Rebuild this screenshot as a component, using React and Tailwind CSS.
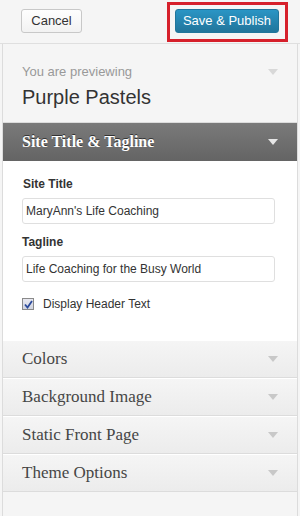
import React from "react";

function Arrow({ color = "border-t-[#c8c8c8]" }) {
  return (
    <span
      className={`block w-0 h-0 border-l-[5px] border-r-[5px] border-t-[6px] border-l-transparent border-r-transparent ${color}`}
    />
  );
}

function Section({ title }) {
  return (
    <div className="flex items-center justify-between h-[38px] pl-[19px] pr-[19px] border-t border-t-[#fff] border-b border-b-[#dcdcdc] bg-gradient-to-b from-[#f5f5f5] to-[#ececec]">
      <span className="text-[17px] text-[#464646]" style={{ fontFamily: '"Liberation Serif", "DejaVu Serif", serif' }}>
        {title}
      </span>
      <Arrow />
    </div>
  );
}

export default function App() {
  const sans = { fontFamily: '"Liberation Sans", Arial, sans-serif' };
  return (
    <div className="w-[300px] h-[516px] bg-[#f5f5f5] overflow-hidden" style={sans}>
      {/* top bar */}
      <div className="relative h-[44px] border-b border-[#dfdfdf] bg-[#f5f5f5] flex items-start justify-between pl-[21px] pr-[21px] pt-[9px]">
        <button className="h-[24px] w-[61px] rounded-[3px] border border-[#c8c8c8] bg-gradient-to-b from-[#fefefe] to-[#f2f2f2] text-[13px] text-[#333]">
          Cancel
        </button>
        <button className="h-[24px] w-[104px] rounded-[3px] border border-[#21759b] bg-gradient-to-b from-[#2a95c5] to-[#21759b] text-[13px] text-white">
          Save &amp; Publish
        </button>
        <div className="absolute left-[167px] top-[2px] w-[121px] h-[40px] border-[3px] border-[#d6202b] pointer-events-none" />
      </div>

      <div className="mx-[2px] w-[296px] border-l border-r border-[#dcdcdc] h-[472px] flex flex-col">
        {/* preview */}
        <div className="h-[79px] bg-[#f5f5f5] border-b border-[#dcdcdc] pl-[19px] pr-[19px] pt-[20px] flex justify-between">
          <div>
            <div className="text-[13px] text-[#999] leading-[16px]">You are previewing</div>
            <div className="text-[20px] text-[#333] leading-[24px] mt-[5px]">Purple Pastels</div>
          </div>
          <div className="pt-[5px]">
            <Arrow color="border-t-[#d8d8d8]" />
          </div>
        </div>

        {/* open section */}
        <div className="h-[38px] bg-gradient-to-b from-[#7a7a7a] to-[#646464] flex items-center justify-between pl-[19px] pr-[19px]">
          <span
            className="text-[16px] font-bold text-white"
            style={{ fontFamily: '"Liberation Serif", "DejaVu Serif", serif', textShadow: "0 -1px 0 #333" }}
          >
            Site Title &amp; Tagline
          </span>
          <Arrow color="border-t-[#e6e6e6]" />
        </div>

        <div className="bg-white pl-[19px] pr-[22px] pt-[15px] h-[179px]">
          <div className="text-[12px] font-bold text-[#333] leading-[16px] pl-[1px]">Site Title</div>
          <div className="mt-[6px] h-[26px] border border-[#dfdfdf] rounded-[3px] flex items-center pl-[3px] text-[12px] text-[#333]">
            MaryAnn's Life Coaching
          </div>
          <div className="mt-[10px] text-[12px] font-bold text-[#333] leading-[16px]">Tagline</div>
          <div className="mt-[6px] h-[26px] border border-[#dfdfdf] rounded-[3px] flex items-center pl-[3px] text-[12px] text-[#333]">
            Life Coaching for the Busy World
          </div>
          <div className="mt-[13px] flex items-center gap-[9px]">
            <span className="w-[12px] h-[12px] border border-[#8a8a8a] bg-gradient-to-b from-[#e8e8f0] to-[#d0d4e0] flex items-center justify-center">
              <svg width="9" height="9" viewBox="0 0 9 9">
                <path d="M1 4.5 L3.5 7.5 L8 1" fill="none" stroke="#2b4a9b" strokeWidth="1.8" />
              </svg>
            </span>
            <span className="text-[12px] text-[#333]">Display Header Text</span>
          </div>
        </div>

        <Section title="Colors" />
        <Section title="Background Image" />
        <Section title="Static Front Page" />
        <Section title="Theme Options" />
        <div className="flex-1 bg-[#f5f5f5]" />
      </div>
    </div>
  );
}
